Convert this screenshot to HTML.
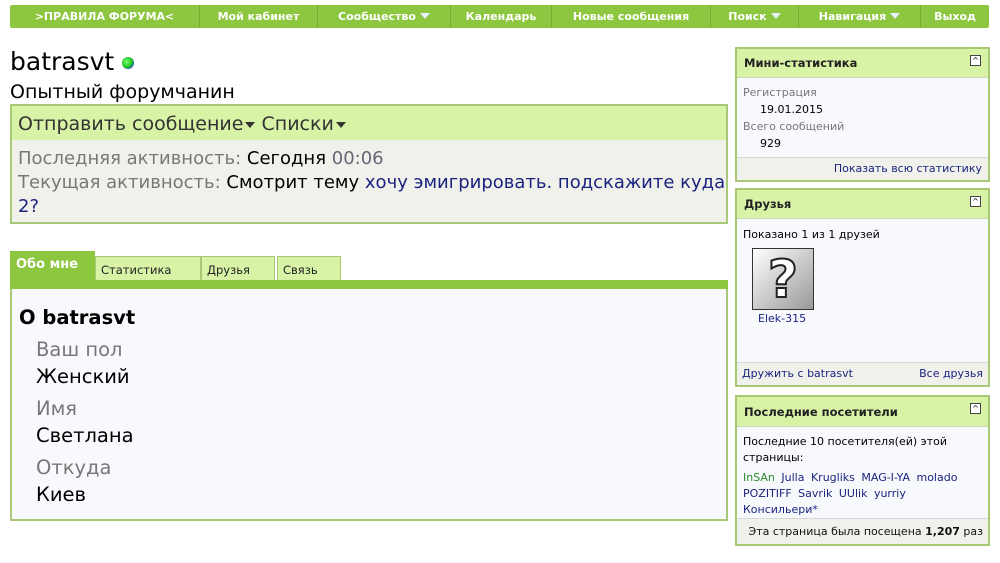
<!DOCTYPE html>
<html><head><meta charset="utf-8"><style>
*{box-sizing:border-box;margin:0;padding:0}
body{width:1000px;height:563px;background:#fff;font-family:"DejaVu Sans","Liberation Sans",sans-serif;color:#000;position:relative;overflow:hidden}
.nav{position:absolute;left:10px;top:5px;width:979px;height:23px;background:#8dc63f;border-radius:2px;display:flex}
.nav div{color:#fff;font-weight:bold;font-size:11px;line-height:23px;text-align:center;border-right:1px solid #7aad34}
.nav div:last-child{border-right:none}
.tri{display:inline-block;width:0;height:0;border-left:5px solid transparent;border-right:5px solid transparent;border-top:6px solid #e8f0ff;margin-left:4px;vertical-align:1px}
.a{position:absolute}
.box{position:absolute;border:2px solid #a8c878;background:#f8f9fd}
.bh{background:#d8f2a6;border-bottom:1px solid #c8d8b8;font-weight:bold;font-size:11.5px;color:#222;padding-left:7px}
.ic{position:absolute;right:7px;top:6px;width:11px;height:11px;border:1px solid #444;background:#fff;font-size:8px;line-height:9px;text-align:center}
.ft{position:absolute;left:0;right:0;bottom:0;background:#f1f1ec;border-top:1px solid #d8d8d8;font-size:11px;color:#1a237e}
.lnk{color:#1a237e}
.dt{display:inline-block;width:0;height:0;border-left:5px solid transparent;border-right:5px solid transparent;border-top:6px solid #333;margin-left:2px;vertical-align:2px;position:relative}
.tab{position:absolute;top:256px;height:24px;background:#d8f2a6;border:1px solid #a8c878;border-bottom:none;font-size:11.5px;line-height:26px;padding-left:5px;color:#222}
.lb{color:#777;line-height:27px;margin-top:5px}
.vl{line-height:27px}
</style></head><body>
<div class="nav">
<div style="width:190px">&gt;ПРАВИЛА ФОРУМА&lt;</div>
<div style="width:118px">Мой кабинет</div>
<div style="width:133px">Сообщество<span class="tri"></span></div>
<div style="width:101px">Календарь</div>
<div style="width:159px">Новые сообщения</div>
<div style="width:88px">Поиск<span class="tri"></span></div>
<div style="width:122px">Навигация<span class="tri"></span></div>
<div style="width:68px">Выход</div>
</div>

<div class="a" style="left:10px;top:47px;font-size:25px;line-height:30px">batrasvt <span style="display:inline-block;width:12px;height:12px;border-radius:50%;background:radial-gradient(circle at 40% 40%,#7f7,#1b1 60%,#2a6ab0 62%);vertical-align:1px"></span></div>
<div class="a" style="left:10px;top:80px;font-size:19px;line-height:24px">Опытный форумчанин</div>

<div class="box" style="left:10px;top:104px;width:718px;height:120px;background:#f1f1ec">
<div style="background:#d8f2a6;height:34px;font-size:19px;line-height:36px;padding-left:6px;color:#333">Отправить сообщение<span class="dt"></span> Списки<span class="dt"></span></div>
<div style="padding:7px 0 0 6px;font-size:18px;line-height:24px;color:#777">Последняя активность: <span style="color:#000">Сегодня</span> <span style="color:#667">00:06</span><br>Текущая активность: <span style="color:#000">Смотрит тему</span> <span class="lnk">хочу эмигрировать. подскажите куда 2?</span></div>
</div>

<div class="a" style="left:10px;top:251px;width:85px;height:30px;background:#8dc63f;color:#fff;font-weight:bold;font-size:13px;line-height:28px;padding-left:6px">Обо мне</div>
<div class="tab" style="left:95px;width:106px">Статистика</div>
<div class="tab" style="left:201px;width:74px">Друзья</div>
<div class="tab" style="left:277px;width:64px">Связь</div>
<div class="a" style="left:10px;top:280px;width:718px;height:10px;background:#8dc63f"></div>
<div class="box" style="left:10px;top:289px;width:718px;height:232px;border-top:none">
<div style="position:absolute;left:7px;top:17px;font-weight:bold;font-size:19.5px">O batrasvt</div>
<div style="position:absolute;left:24px;top:42px;font-size:19.5px">
<div class="lb">Ваш пол</div><div class="vl">Женский</div>
<div class="lb">Имя</div><div class="vl">Светлана</div>
<div class="lb">Откуда</div><div class="vl">Киев</div></div>
</div>

<div class="box" style="left:735px;top:47px;width:255px;height:135px">
<div class="bh" style="height:29px;line-height:29px">Мини-статистика</div><div class="ic">^</div>
<div style="padding:6px 0 0 6px;font-size:11px;line-height:17px"><div style="color:#777">Регистрация</div><div style="padding-left:17px">19.01.2015</div><div style="color:#777">Всего сообщений</div><div style="padding-left:17px">929</div></div>
<div class="ft" style="height:23px;line-height:22px;text-align:right;padding-right:6px">Показать всю статистику</div>
</div>

<div class="box" style="left:735px;top:188px;width:255px;height:199px">
<div class="bh" style="height:29px;line-height:29px">Друзья</div><div class="ic">^</div>
<div style="padding:9px 0 0 6px;font-size:11px">Показано 1 из 1 друзей</div>
<div style="position:absolute;left:15px;top:58px;width:62px;height:62px;border:1px solid #333;background:linear-gradient(135deg,#fff,#999);text-align:center;font-size:52px;line-height:62px;font-weight:bold;color:#fff;-webkit-text-stroke:2px #222">?</div>
<div style="position:absolute;left:21px;top:122px;font-size:11px" class="lnk">Elek-315</div>
<div class="ft" style="height:23px;line-height:22px;padding:0 5px;display:flex;justify-content:space-between"><span>Дружить с batrasvt</span><span>Все друзья</span></div>
</div>

<div class="box" style="left:735px;top:395px;width:255px;height:151px">
<div class="bh" style="height:30px;line-height:30px">Последние посетители</div><div class="ic">^</div>
<div style="padding:7px 6px 0 6px;font-size:11px;line-height:16px">Последние 10 посетителя(ей) этой страницы:<div style="margin-top:4px;word-spacing:3px" class="lnk"><span style="color:#2a8a2a">InSAn</span> Julla Krugliks MAG-I-YA molado POZITIFF Savrik UUlik yurriy Консильери*</div></div>
<div class="ft" style="height:26px;line-height:25px;text-align:right;padding-right:5px;color:#111">Эта страница была посещена <b>1,207</b> раз</div>
</div>
</body></html>
